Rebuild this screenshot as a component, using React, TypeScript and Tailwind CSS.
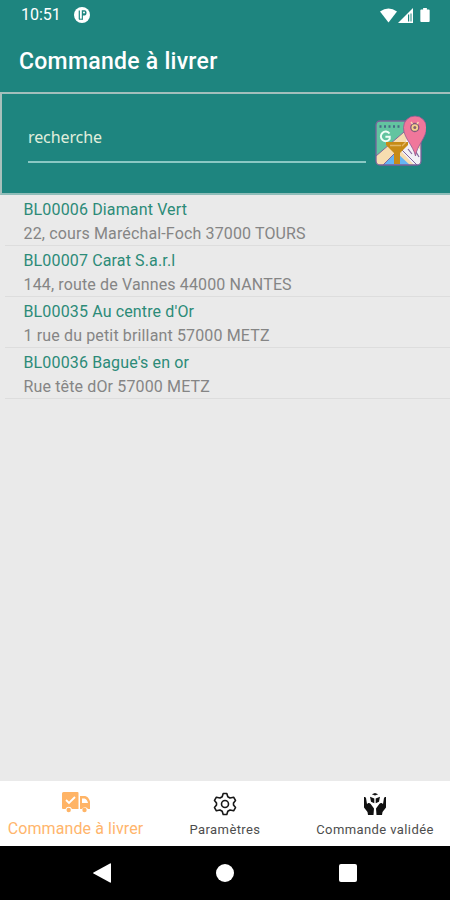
const deliveries = [
    { ref: 'BL00006', client: 'Diamant Vert', address: '22, cours Maréchal-Foch 37000 TOURS' },
    { ref: 'BL00007', client: 'Carat S.a.r.l', address: '144, route de Vannes 44000 NANTES' },
    { ref: 'BL00035', client: "Au centre d'Or", address: '1 rue du petit brillant 57000 METZ' },
    { ref: 'BL00036', client: "Bague's en or", address: 'Rue tête dOr 57000 METZ' },
]

const StatusBar = () => (
    <div className="flex h-[30px] items-center pl-[21px] pr-[19px] text-white">
        <span className="text-[16px] leading-[30px]">10:51</span>
        <svg viewBox="0 0 16 16" className="ml-[13px] h-4 w-4">
            <circle cx="8" cy="8" r="8" fill="#fff" />
            <path d="M5.300 3.500v8.700" stroke="#1e857f" strokeWidth="1.200" fill="none" />
            <path d="M7.800 3.300h2.700c2.800 0 2.800 5.200 0 5.200H8.900v4.300H7.800z" fill="#1e857f" />
            <circle cx="10" cy="5.500" r="1" fill="#fff" />
            <path d="M5 12.200h3.500" stroke="#1e857f" strokeWidth="1" />
        </svg>

        <div className="ml-auto flex items-center">
            <svg viewBox="0 0 17 15" className="h-[15px] w-[17px]" fill="#fff">
                <path d="M0 3.500Q8.500-2.700 17 3.500L8.500 14.500z" />
            </svg>
            <svg viewBox="0 0 15 15" className="ml-px h-[15px] w-[15px]">
                <path d="M15 0v15H0z" fill="#fff" />
                <path d="M10 6.500h1.200v7H10zM12.500 5.500h1v8h-1z" fill="#1e857f" />
            </svg>
            <svg viewBox="0 0 10 15" className="ml-[7px] mr-px h-[14px] w-[10px]" fill="#fff">
                <path d="M3 0h4v1.500h2q1 0 1 1V14q0 1-1 1H1q-1 0-1-1V2.500q0-1 1-1h2z" />
            </svg>
        </div>
    </div>
)

const MapFilterIcon = () => (
    <svg viewBox="0 0 52 52" className="h-[52px] w-[52px]">
        <defs>
            <clipPath id="map">
                <rect x="2" y="7" width="45" height="44" rx="4" />
            </clipPath>
        </defs>
        <g clipPath="url(#map)">
            <path d="M2 7h45v45H2z" fill="#62c4a0" />
            <path d="M2 42 31 17h16v35H2z" fill="#f7ddb0" />
            <path d="M8 52 22 38l15 14z" fill="#64b5f4" />
            <path d="M29 33 33 25 47 36v16h-6L25 35z" fill="#f2f1f6" />
            <path d="M2 42 30 18M8 52 22 38M26 34l18 18" stroke="#80659d" strokeWidth="1" fill="none" />
            <path d="m34 35 4 5m4-2 3 5" stroke="#80659d" strokeWidth="1.200" />
        </g>
        <rect x="2" y="7" width="45" height="44" rx="4" fill="none" stroke="#7a609a" strokeWidth="1.300" />
        <path d="M5.500 12.500h21" stroke="#466a83" strokeWidth="2.500" strokeDasharray="2 2.500" />
        <path d="M15.500 19.500a4.800 4.800 0 1 0 .2 5.500v-2.200h-4.300" fill="none" stroke="#effff7" strokeWidth="2" />
        <path d="M12 28h22v3l-8 8v11h-6V39l-8-8z" fill="#c78b16" />
        <path d="M16 31.500h11M28 32l4-4" stroke="#e0b666" strokeWidth="1.300" />
        <path d="M41.500 42C39 31 29.500 24 29.500 13.500a11.500 11.500 0 0 1 23 0C52.500 24 43 31 41.500 42z" fill="#f0779b" stroke="#8c5b92" strokeWidth=".8" />
        <circle cx="40.800" cy="13.500" r="4" fill="#f5d28c" stroke="#80597c" strokeWidth="1.300" />
        <circle cx="40.800" cy="13.500" r="1.500" fill="#86616e" />
        <path d="m37 8 1.500 2m4.500 0 1.500-2" stroke="#f9dab0" strokeWidth="1.300" />
    </svg>
)

const TruckIcon = () => (
    <svg viewBox="0 0 28 21" className="h-[21px] w-[28px]" fill="#ffb466">
        <path d="M1.500 0h14q1 0 1 1v16H10a3.500 3.500 0 0 0-6.500 0H1q-1 0-1-1V1.500Q0 0 1.500 0z" />
        <path d="M18 4h5c2.500 0 5 3.800 5 6v7h-2a3.500 3.500 0 0 0-6 0h-2zM20 6.500V11h6c-.3-2-2-4.500-3.500-4.500z" fillRule="evenodd" />
        <circle cx="6.700" cy="18" r="2.200" />
        <circle cx="22.500" cy="18" r="2.200" />
        <path d="m4 8 3 3 6-6" fill="none" stroke="#fff" strokeWidth="1.800" />
    </svg>
)

const GearIcon = () => (
    <svg viewBox="0 0 24 24" className="h-[24px] w-[24px]" fill="none" stroke="#171717" strokeWidth="1.600" strokeLinejoin="round">
        <path d="M10.200 1.500h3.600l1 3.200 2.200 1.300 3.600-.8 1.900 3.200L20.500 11v2l2 2.600-1.900 3.200L17 18l-2.200 1.300-1 3.200h-3.600l-1-3.200L7 18l-3.600.8-1.900-3.200L3.500 13v-2l-2-2.600 1.900-3.200L7 6l2.200-1.300z" />
        <circle cx="12" cy="12" r="3.500" />
    </svg>
)

const HandsIcon = () => (
    <svg viewBox="0 0 24 24" className="h-[24px] w-[24px]" fill="#111">
        <path d="M1 5q1.500-.5 2 1l1 6 1-.8c1-.7 2 0 2.700.8L11 16.500 10.500 23H5l-.5-3L1 15.500zM23 5q-1.500-.5-2 1l-1 6-1-.8c-1-.7-2 0-2.700.8L13 16.500l.5 6.500H19l.5-3 3.500-4.500z" />
        <path d="m8.800 2.200 3.200-1.300 3.200 1.300L12 3.600zM7 4.800l4.300 1.700v4.800L8 9.800zM17 4.800l-4.300 1.700v4.800L16 9.800z" />
    </svg>
)

const SearchPanel = () => (
    <section className="flex h-[103px] border-y-2 border-l-2 border-b-[#8fbdb9] border-l-[#a9c0bc] border-t-[#a3bfbc] pl-[26px]">
        <div className="mt-[25px] h-[44px] w-[338px] border-b-2 border-[#8bc8c4]">
            <p className="font-['Noto_Sans'] text-[16px] leading-[37px] tracking-[-0.1px] text-[#e1efdd]">recherche</p>
        </div>
        <div className="ml-[8px] mt-[20px]">
            <MapFilterIcon />
        </div>
    </section>
)

const BottomTabs = () => (
    <nav className="grid h-[65px] grid-cols-3 bg-white text-[#4d4d4d]">
        <div className="flex flex-col items-center pl-px pt-[11px]">
            <TruckIcon />
            <span className="mt-[5px] whitespace-nowrap text-[16px] leading-[22px] tracking-[0.1px] text-[#ffb56c]">Commande à livrer</span>
        </div>
        <div className="flex flex-col items-center pt-[11px]">
            <GearIcon />
            <span className="mt-[4px] text-[13px] leading-[20px] tracking-[0.4px]">Paramètres</span>
        </div>
        <div className="flex flex-col items-center pt-[11px]">
            <HandsIcon />
            <span className="mt-[4px] whitespace-nowrap text-[13px] leading-[20px] tracking-[0.4px]">Commande validée</span>
        </div>
    </nav>
)

const SystemNav = () => (
    <div className="flex h-[54px] items-center bg-black text-white">
        <svg viewBox="0 0 18 20" className="ml-[93px] h-[20px] w-[18px]" fill="currentColor">
            <path d="M17 .5q1-.5 1 .5v18q0 1-1 .5L.500 10.500q-.8-.5 0-1z" />
        </svg>
        <div className="ml-[105px] h-[18px] w-[18px] rounded-full bg-white" />
        <div className="ml-[105px] h-[18px] w-[18px] rounded-[2px] bg-white" />
    </div>
)

export default function App() {
    return (
        <div className="flex h-[900px] w-[450px] flex-col overflow-hidden bg-[#eaeaea] font-['Roboto',sans-serif]">
            <header className="bg-[#1e857f]">
                <StatusBar />
                <h1 className="h-[62px] pl-[19px] text-[23px] font-medium leading-[64px] tracking-[0.27px] text-white">Commande à livrer</h1>
                <SearchPanel />
            </header>

            <main className="flex-1 pl-[5px]">
                {deliveries.map(d => (
                    <div key={d.ref} className="h-[51px] border-b border-[#dddddd] pl-[18.5px] pt-[3px] text-[16px] leading-[24px]">
                        <p className="tracking-[0.14px] text-[#2c8b78]">{d.ref} {d.client}</p>
                        <p className="tracking-[0.14px] text-[#858585]">{d.address}</p>
                    </div>
                ))}
            </main>

            <BottomTabs />
            <SystemNav />
        </div>
    )
}
